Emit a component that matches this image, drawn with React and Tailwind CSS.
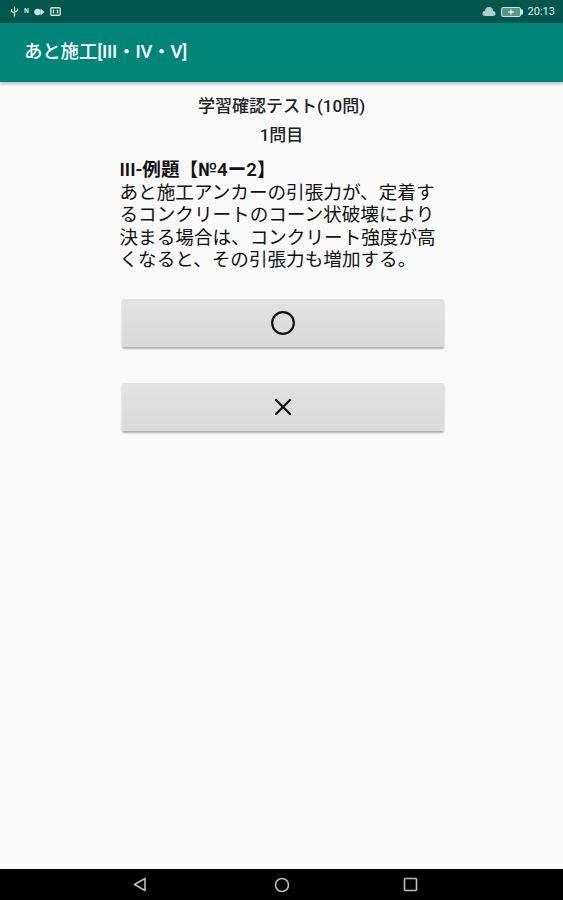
import { Circle, X } from 'lucide-react'

const font = { fontFamily: 'Roboto, "Noto Sans CJK JP", sans-serif' }

function StatusBar() {
  return (
    <div className="h-[23px] bg-[#00574b] flex items-center justify-between pl-[10px] pr-[8px] text-[#cfe3df]">
      <div className="flex items-center gap-[5px]">
        {/* usb */}
        <svg width="9" height="11" viewBox="0 0 9 11" fill="none" stroke="currentColor" strokeWidth="1.3">
          <path d="M4.5 0.5v10M1.5 3v2.5l3 1.5M7.5 2.5v2l-3 1.5" />
        </svg>
        <span className="text-[7px] font-bold leading-none">N</span>
        <svg width="11" height="10" viewBox="0 0 11 10" fill="currentColor">
          <circle cx="3.5" cy="5" r="3.2" />
          <path d="M6.5 1.5 10.5 5 6.5 8.5z" />
        </svg>
        <svg width="11" height="9" viewBox="0 0 11 9" fill="none" stroke="currentColor" strokeWidth="1.4">
          <rect x="0.8" y="0.8" width="9.4" height="7.4" rx="1" />
          <path d="M3.5 2.5v4M7.5 2.5v4" />
        </svg>
      </div>
      <div className="flex items-center gap-[5px]">
        <svg width="14" height="11" viewBox="0 0 14 11" fill="currentColor" opacity="0.85">
          <path d="M3 5a4 4 0 0 1 8 0 2.5 2.5 0 0 1 0 5H3a2.5 2.5 0 0 1 0-5z" />
        </svg>
        <svg width="22" height="10" viewBox="0 0 22 10" fill="none" stroke="currentColor" strokeWidth="1">
          <rect x="0.5" y="0.5" width="19" height="9" rx="1.5" fill="currentColor" fillOpacity="0.45" />
          <rect x="20" y="3" width="1.5" height="4" fill="currentColor" />
          <path d="M7 5h6M10 2.5v5" stroke="#ffffff" strokeWidth="1.2" />
        </svg>
        <span className="text-[11px] leading-none text-[#e6f1ef]" style={font}>20:13</span>
      </div>
    </div>
  )
}

function AnswerButton({ children }) {
  return (
    <button className="w-[322px] h-[48px] ml-[2px] rounded-[2px] bg-gradient-to-b from-[#e3e3e3] to-[#d9d9d9] shadow-[0_2px_2px_rgba(0,0,0,0.3)] flex items-center justify-center text-[#111]">
      {children}
    </button>
  )
}

export default function App() {
  return (
    <div className="w-[563px] h-[900px] flex flex-col bg-[#fafafa]" style={font}>
      <StatusBar />
      <div className="h-[59px] bg-[#008577] flex items-center pl-[24px] shadow-[0_2px_3px_rgba(0,0,0,0.25)] z-10">
        <h1 className="text-white text-[18.5px] font-medium tracking-[-0.2px]">あと施工[III・IV・V]</h1>
      </div>

      <main className="flex-1 flex flex-col items-center pt-[10px]">
        <div className="text-[17px] leading-[29px] text-[#222] font-medium">学習確認テスト(10問)</div>
        <div className="text-[17px] leading-[29px] text-[#222] font-medium">1問目</div>

        <div className="w-[324px] mt-[9px] text-[18.6px] leading-[22.5px] text-[#111] whitespace-nowrap">
          <div className="font-semibold">III-例題【№4ー2】</div>
          <div>あと施工アンカーの引張力が、定着す</div>
          <div>るコンクリートのコーン状破壊により</div>
          <div>決まる場合は、コンクリート強度が高</div>
          <div>くなると、その引張力も増加する。</div>
        </div>

        <div className="w-[324px] mt-[27px] flex flex-col gap-[36px]">
          <AnswerButton>
            <Circle size={26} strokeWidth={2} />
          </AnswerButton>
          <AnswerButton>
            <X size={28} strokeWidth={2} />
          </AnswerButton>
        </div>
      </main>

      <div className="h-[31px] bg-black flex items-center pl-[133px] text-[#bdbdbd]">
        <svg width="14" height="15" viewBox="0 0 14 15" fill="none" stroke="currentColor" strokeWidth="1.6" strokeLinejoin="round">
          <path d="M12 1.5v12L1.5 7.5z" />
        </svg>
        <svg className="ml-[127px]" width="16" height="16" viewBox="0 0 16 16" fill="none" stroke="currentColor" strokeWidth="1.6">
          <circle cx="8" cy="8" r="6.5" />
        </svg>
        <svg className="ml-[113px]" width="15" height="15" viewBox="0 0 15 15" fill="none" stroke="currentColor" strokeWidth="1.6">
          <rect x="1.5" y="1.5" width="12" height="12" rx="1" />
        </svg>
      </div>
    </div>
  )
}
